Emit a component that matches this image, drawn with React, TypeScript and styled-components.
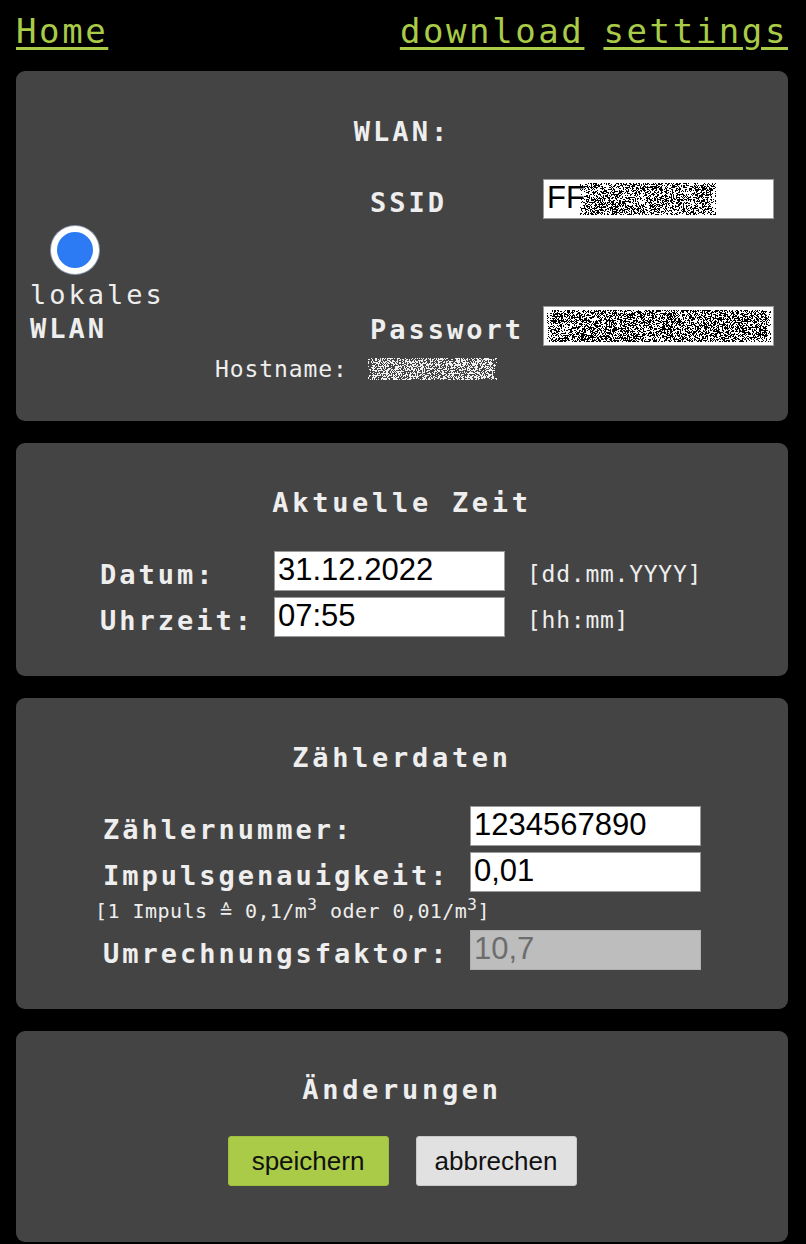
import React from 'react'
import styled, { createGlobalStyle } from 'styled-components'

const GlobalStyle = createGlobalStyle`
  html, body {
    margin: 0;
    padding: 0;
    background: #000;
  }
  body {
    font-family: "DejaVu Sans Mono", monospace;
    color: #eeeeee;
  }
`

const GREEN = '#a9cb47'

const Page = styled.div`
  width: 772px;
  margin-left: 16px;
`

const Header = styled.nav`
  height: 62px;
  margin-bottom: 9px;
  display: flex;
  align-items: center;
  justify-content: space-between;
`

const NavLink = styled.a`
  font-size: 34px;
  letter-spacing: 2.6px;
  color: ${GREEN};
  text-decoration: underline;
  text-decoration-thickness: 3px;
  text-underline-offset: 4px;
  cursor: pointer;
`

const NavRight = styled.div`
  display: flex;
  gap: 19px;
`

const Panel = styled.section<{ $top: number, $bottom: number }>`
  background: #444444;
  border-radius: 9px;
  padding: ${p => p.$top}px 14px ${p => p.$bottom}px;
  margin-bottom: 22px;
`

const Title = styled.h2<{ $spacing?: number }>`
  margin: 0;
  text-align: center;
  font-size: 27px;
  line-height: 40px;
  letter-spacing: ${p => p.$spacing ?? 3.7}px;
  font-weight: bold;
`

const WlanRow = styled.div`
  margin-top: 27px;
  display: flex;
`

const RadioColumn = styled.label`
  width: 340px;
  align-self: flex-end;
  display: flex;
  flex-direction: column;
  font-size: 27px;
  letter-spacing: 3px;
  line-height: 34px;
`

const Radio = styled.input`
  appearance: none;
  margin: 0 0 4px 21px;
  width: 48px;
  height: 48px;
  border-radius: 50%;
  background: #2d7bf4;
  border: 6px solid #fff;
  box-shadow: 0 0 0 1px #8f9bb0;
  box-sizing: border-box;
`

const Strong = styled.span`
  font-weight: bold;
`

const FieldGrid = styled.div<{ $cols: string, $gap?: number }>`
  display: grid;
  grid-template-columns: ${p => p.$cols};
  row-gap: ${p => p.$gap ?? 6}px;
  align-items: center;
`

const Label = styled.label`
  font-size: 27px;
  font-weight: bold;
  letter-spacing: 3px;
  padding-top: 6px;
  white-space: nowrap;
`

const FieldWrap = styled.div`
  position: relative;
  width: 231px;
  height: 40px;
`

const TextInput = styled.input`
  box-sizing: border-box;
  width: 231px;
  height: 40px;
  margin: 0;
  padding: 0 3px 2px;
  border: 1px solid #9a9a9a;
  background: #fff;
  color: #000;
  font-family: "Liberation Sans", Arial, sans-serif;
  font-size: 31px;
  outline: none;

  &:disabled {
    background: #bdbdbd;
    color: #6d6d6d;
    border-color: #b0b0b0;
  }
`

const NoiseSpot = styled.div<{ $left: number, $top: number }>`
  position: absolute;
  left: ${p => p.$left}px;
  top: ${p => p.$top}px;
  line-height: 0;
`

const HostRow = styled.div`
  margin-top: 8px;
  padding-left: 185px;
  display: flex;
  align-items: center;
  gap: 20px;
  height: 30px;
`

const Small = styled.span`
  font-size: 23px;
  letter-spacing: 0.9px;
`

const Hint = styled.span`
  font-size: 23px;
  letter-spacing: 0.75px;
  padding: 6px 0 0 22px;
`

const TimeFields = styled(FieldGrid)`
  margin-top: 28px;
  padding-left: 70px;
`

const CounterFields = styled(FieldGrid)`
  margin-top: 28px;
  padding-left: 73px;
`

const Note = styled.div`
  grid-column: 1 / -1;
  height: 26px;
  margin-left: -8px;
  font-size: 20px;
  line-height: 26px;
  letter-spacing: 0.45px;

  sup {
    font-size: 0.8em;
    line-height: 0;
  }
`

const Buttons = styled.div`
  margin-top: 26px;
  display: flex;
  justify-content: center;
  gap: 27px;
`

const Button = styled.button<{ $primary?: boolean }>`
  width: 161px;
  height: 50px;
  border: 1px solid ${p => (p.$primary ? '#9fbf3c' : '#c9c9c9')};
  border-radius: 3px;
  background: ${p => (p.$primary ? GREEN : '#e1e1e1')};
  color: #111;
  font-family: "Liberation Sans", Arial, sans-serif;
  font-size: 26px;
  cursor: pointer;
`

// pixel noise standing in for the blurred-out values
function Noise({ width, height, color, seed, density = 0.45 }: {
  width: number, height: number, color: string, seed: number, density?: number
}) {
  let s = seed
  const rnd = () => {
    s = (s * 1103515245 + 12345) % 2147483648
    return s / 2147483648
  }
  let d = ''
  for (let y = 0; y < height; y++) {
    for (let x = 0; x < width; x++) {
      const edge = Math.min(x, width - 1 - x) < 4 ? 0.5 : 1
      if (rnd() < density * edge) d += `M${x} ${y}h1v1h-1z`
    }
  }
  return (
    <svg width={width} height={height} viewBox={`0 0 ${width} ${height}`}>
      <path d={d} fill={color} />
    </svg>
  )
}

export default function App() {
  return (
    <>
      <GlobalStyle />
      <Page>
        <Header>
          <NavLink>Home</NavLink>
          <NavRight>
            <NavLink>download</NavLink>
            <NavLink>settings</NavLink>
          </NavRight>
        </Header>

        <Panel $top={41} $bottom={37}>
          <Title $spacing={3}>WLAN:</Title>
          <WlanRow>
            <RadioColumn>
              <Radio type='radio' name='mode' defaultChecked />
              <span>lokales</span>
              <Strong>WLAN</Strong>
            </RadioColumn>
            <FieldGrid $cols='173px 231px' $gap={87}>
              <Label>SSID</Label>
              <FieldWrap>
                <TextInput defaultValue='FF' />
                <NoiseSpot $left={37} $top={4}>
                  <Noise width={136} height={32} color='#000' seed={7} />
                </NoiseSpot>
              </FieldWrap>
              <Label>Passwort</Label>
              <FieldWrap>
                <TextInput type='text' defaultValue='' />
                <NoiseSpot $left={4} $top={4}>
                  <Noise width={224} height={32} color='#000' seed={19} density={0.5} />
                </NoiseSpot>
              </FieldWrap>
            </FieldGrid>
          </WlanRow>
          <HostRow>
            <Small>Hostname:</Small>
            <Noise width={129} height={22} color='#f2f2f2' seed={33} density={0.5} />
          </HostRow>
        </Panel>

        <Panel $top={40} $bottom={39}>
          <Title>Aktuelle Zeit</Title>
          <TimeFields $cols='174px 231px auto'>
            <Label>Datum:</Label>
            <TextInput defaultValue='31.12.2022' />
            <Hint>[dd.mm.YYYY]</Hint>
            <Label>Uhrzeit:</Label>
            <TextInput defaultValue='07:55' />
            <Hint>[hh:mm]</Hint>
          </TimeFields>
        </Panel>

        <Panel $top={40} $bottom={39}>
          <Title>Zählerdaten</Title>
          <CounterFields $cols='367px 231px'>
            <Label>Zählernummer:</Label>
            <TextInput defaultValue='1234567890' />
            <Label>Impulsgenauigkeit:</Label>
            <TextInput defaultValue='0,01' />
            <Note>[1 Impuls ≙ 0,1/m<sup>3</sup> oder 0,01/m<sup>3</sup>]</Note>
            <Label>Umrechnungsfaktor:</Label>
            <TextInput defaultValue='10,7' disabled />
          </CounterFields>
        </Panel>

        <Panel $top={39} $bottom={56}>
          <Title>Änderungen</Title>
          <Buttons>
            <Button $primary>speichern</Button>
            <Button>abbrechen</Button>
          </Buttons>
        </Panel>
      </Page>
    </>
  )
}
